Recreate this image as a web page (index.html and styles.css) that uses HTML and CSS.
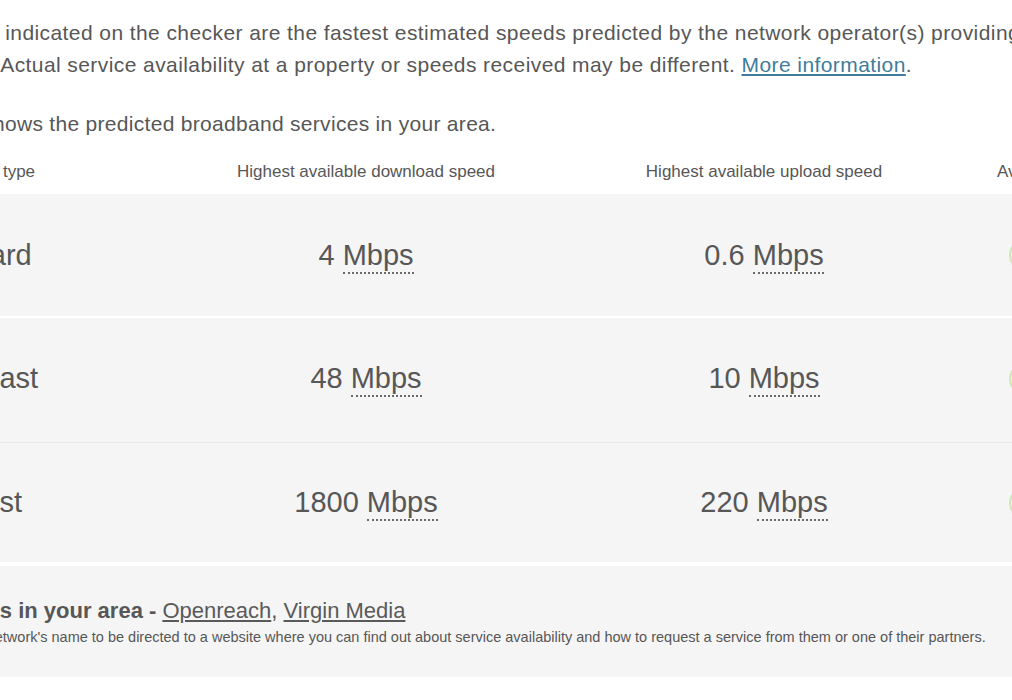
FILE: index.html
```html
<!DOCTYPE html>
<html lang="en">
<head>
<meta charset="utf-8">
<title>Broadband coverage</title>
<link rel="stylesheet" href="styles.css">
</head>
<body>
<div class="page">
  <p class="intro">The speeds indicated on the checker are the fastest estimated speeds predicted by the network operator(s) providing services<br>in the area. Actual service availability at a property or speeds received may be different. <a class="more" href="#">More information</a>.</p>
  <p class="intro lead">This table shows the predicted broadband services in your area.</p>

  <div class="table">
    <div class="row head">
      <div class="cell type">Broadband type</div>
      <div class="cell num">Highest available download speed</div>
      <div class="cell num">Highest available upload speed</div>
      <div class="cell avail">Availability</div>
    </div>
    <div class="row data">
      <div class="cell type">Standard</div>
      <div class="cell num">4 <abbr title="Megabits per second">Mbps</abbr></div>
      <div class="cell num">0.6 <abbr title="Megabits per second">Mbps</abbr></div>
      <div class="cell avail"><span class="tick"></span></div>
    </div>
    <div class="row data mid">
      <div class="cell type">Superfast</div>
      <div class="cell num">48 <abbr title="Megabits per second">Mbps</abbr></div>
      <div class="cell num">10 <abbr title="Megabits per second">Mbps</abbr></div>
      <div class="cell avail"><span class="tick"></span></div>
    </div>
    <div class="row data last">
      <div class="cell type">Ultrafast</div>
      <div class="cell num">1800 <abbr title="Megabits per second">Mbps</abbr></div>
      <div class="cell num">220 <abbr title="Megabits per second">Mbps</abbr></div>
      <div class="cell avail"><span class="tick"></span></div>
    </div>
  </div>

  <div class="networks">
    <p class="net-title"><strong>Networks in your area - </strong><a href="#">Openreach</a>, <a href="#">Virgin Media</a></p>
    <p class="net-note">Click on a network's name to be directed to a website where you can find out about service availability and how to request a service from them or one of their partners.</p>
  </div>
</div>
</body>
</html>
```

FILE: styles.css
```css
html, body {
  margin: 0;
  padding: 0;
  background: #ffffff;
  overflow: hidden;
}

body {
  font-family: "Liberation Sans", Arial, sans-serif;
  color: #575757;
}

.page {
  width: 1440px;
  margin-left: -115px;
}

.intro {
  margin: 0;
  font-size: 21px;
  letter-spacing: 0.42px;
  line-height: 32px;
  white-space: nowrap;
  padding-top: 17px;
}

.intro.lead {
  padding-top: 27px;
  letter-spacing: 0.3px;
  text-indent: -3px;
}

.more {
  color: #3f7c9c;
}

.table {
  margin-top: 10px;
}

.row {
  display: grid;
  grid-template-columns: 282px 398px 398px 362px;
  align-items: center;
}

.head {
  height: 44px;
  font-size: 17px;
  background: #ffffff;
}

.data {
  height: 122px;
  font-size: 29px;
  background: #f5f5f5;
  border-bottom: 2px solid #ffffff;
}

.data.mid {
  padding-bottom: 3px;
  box-sizing: border-box;
  height: 125px;
  border-bottom: 1px solid #e9e9e9;
}

.data.last {
  height: 119px;
  border-bottom: 4px solid #ffffff;
}

.cell.type {
  padding-left: 29px;
}

.head .cell.type {
  padding-left: 30px;
}

.cell.num {
  text-align: center;
}

.cell.avail {
  padding-left: 34px;
}

.data .cell.avail {
  padding-left: 46px;
  display: flex;
  align-items: center;
}

abbr {
  text-decoration: none;
  border-bottom: 2px dotted #6a6a6a;
  padding-bottom: 1px;
}

.tick {
  display: inline-block;
  width: 30px;
  height: 30px;
  border-radius: 50%;
  background: #eef5e4;
  border: 2px solid #d3e6b6;
}

.networks {
  background: #f5f5f5;
  height: 111px;
  padding: 33px 28px 0 28px;
  box-sizing: border-box;
}

.networks p {
  margin: 0;
  white-space: nowrap;
}

.net-title {
  font-size: 22px;
  line-height: 24px;
}

.net-title strong {
  font-weight: bold;
}

.net-title a {
  color: #5a5a5a;
}

.net-note {
  font-size: 14.5px;
  line-height: 28px;
  padding-left: 6px;
}
```
